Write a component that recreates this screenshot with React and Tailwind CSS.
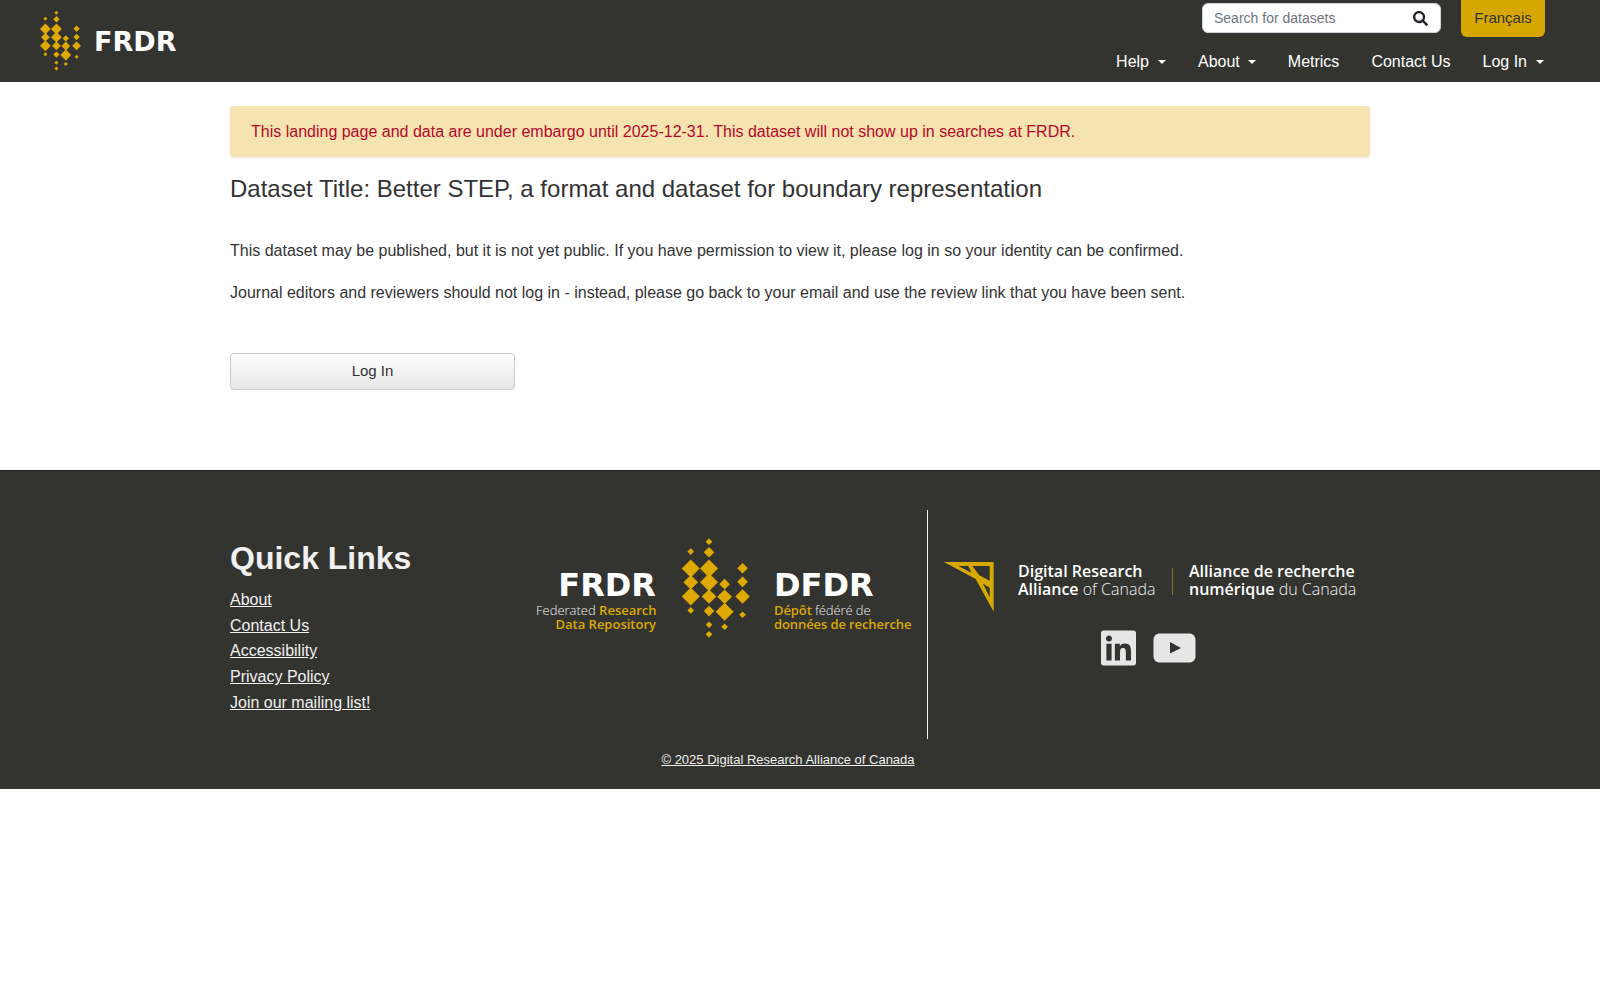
import React from "react";
import { FaSearch, FaLinkedin } from "react-icons/fa";

const D = [[567,94,10],[512,124,10],[567,126,16],[512,175,27],[567,175,27],[668,174,16],[512,216,22],[567,216,27],[614,222,16],[668,215,16],[512,259,27],[567,259,22],[614,260,22],[668,259,22],[512,301,10],[567,303,16],[614,305,27],[668,314,10],[567,344,10],[614,350,10],[567,373,10]];

function Diamonds({ className }) {
  return (
    <svg viewBox="480 80 210 310" className={className} fill="#dea900">
      {D.map(([x, y, r], i) => (
        <polygon key={i} points={`${x},${y - r} ${x + r},${y} ${x},${y + r} ${x - r},${y}`} />
      ))}
    </svg>
  );
}

function Caret({ tight }) {
  return <span className={`${tight ? "ml-[8px]" : "ml-[9px]"} inline-block align-[3px] border-x-[4px] border-t-[4px] border-x-transparent border-t-white`} />;
}

function Header() {
  return (
    <header className="flex h-[82px] justify-between bg-[#33342f] pr-[55px]">
      <div className="flex items-start pl-[39px] pt-[10px]">
        <Diamonds className="h-[62px] w-[42px]" />
        <span className="ml-[13px] mt-[16px] font-['DejaVu_Sans'] text-[27px] font-bold leading-[32px] text-white">FRDR</span>
      </div>
      <div className="flex flex-col items-end">
        <div className="flex items-start">
          <div className="mt-[3px] flex h-[30px] w-[239px] items-center justify-between rounded-[6px] border border-[#ced4da] bg-white pl-[11px] pr-[12px]">
            <span className="text-[14px] text-[#6c757d]">Search for datasets</span>
            <FaSearch className="h-[15px] w-[15px] text-[#212529]" />
          </div>
          <button className="ml-[20px] h-[37px] w-[84px] rounded-b-[6px] bg-[#d6a700] text-[15px] text-[#33342f]">Français</button>
        </div>
        <nav className="mr-[1px] mt-[13px] flex gap-[32px] text-[16px] leading-[24px] text-white">
          <span>Help<Caret /></span>
          <span>About<Caret tight /></span>
          <span>Metrics</span>
          <span>Contact Us</span>
          <span>Log In<Caret /></span>
        </nav>
      </div>
    </header>
  );
}

function Main() {
  return (
    <main className="mx-auto h-[388px] w-[1140px] pt-[24px] text-[#333333]">
      <div className="flex h-[51px] items-center rounded-[4px] bg-[#f5e4b0] px-[21px] text-[16px] text-[#b5082a] shadow-[0_1px_2px_rgba(0,0,0,0.1)]">
        This landing page and data are under embargo until 2025-12-31. This dataset will not show up in searches at FRDR.
      </div>
      <h1 className="mt-[17px] text-[24px] leading-[29px]">Dataset Title: Better STEP, a format and dataset for boundary representation</h1>
      <p className="mt-[36px] text-[16px] leading-[24px]">This dataset may be published, but it is not yet public. If you have permission to view it, please log in so your identity can be confirmed.</p>
      <p className="mt-[18px] text-[16px] leading-[24px]">Journal editors and reviewers should not log in - instead, please go back to your email and use the review link that you have been sent.</p>
      <button className="mt-[48px] block h-[37px] w-[285px] rounded-[4px] border border-[#ccc] bg-gradient-to-b from-white to-[#e6e6e6] text-[15px] text-[#333]">Log In</button>
    </main>
  );
}

function Footer() {
  const links = ["About", "Contact Us", "Accessibility", "Privacy Policy", "Join our mailing list!"];
  return (
    <footer className="h-[319px] border-t border-t-[#1d1e1c] bg-[#33342f] pt-[39px] text-[#f0f0f0]">
      <div className="mx-auto flex h-[229px] w-[1140px]">
        <div className="w-[306px] pt-[27px]">
          <h2 className="text-[32px] font-bold leading-[42px]">Quick Links</h2>
          <ul className="mt-[8px] text-[16px] leading-[25.7px] underline">
            {links.map((l) => <li key={l}>{l}</li>)}
          </ul>
        </div>
        <div className="flex w-[375px] items-start pt-[27px] font-['Open_Sans']">
          <div className="mt-[30px] w-[120px] whitespace-nowrap text-right">
            <div className="font-['DejaVu_Sans'] text-[32px] font-bold leading-[36px] text-white">FRDR</div>
            <div className="text-[13px] leading-[14px]"><span className="font-light">Federated </span><span className="font-semibold text-[#dea900]">Research</span></div>
            <div className="text-[13px] font-semibold leading-[14px] text-[#dea900]">Data Repository</div>
          </div>
          <Diamonds className="ml-[24px] h-[103px] w-[70px]" />
          <div className="ml-[24px] mt-[30px] w-[137px] whitespace-nowrap">
            <div className="font-['DejaVu_Sans'] text-[32px] font-bold leading-[36px] text-white">DFDR</div>
            <div className="text-[13px] leading-[14px] tracking-[-0.1px]"><span className="font-semibold text-[#dea900]">Dépôt</span><span className="font-light"> fédéré de</span></div>
            <div className="text-[13px] font-semibold leading-[14px] tracking-[-0.1px] text-[#dea900]">données de recherche</div>
          </div>
        </div>
        <div className="ml-[16px] w-px bg-[#f0f0f0]" />
        <div className="flex flex-col pl-[16px] pt-[52px]">
          <div className="flex items-start font-['Open_Sans'] text-[16px] leading-[18px]">
            <svg viewBox="73 96 150 150" className="h-[50px] w-[50px]">
              <polygon points="73,96 222,96 222,245 168,147" fill="#d6a900" />
              <polygon points="116,108 146,108 155,128" fill="#33342f" />
              <polygon points="158,108 210,108 210,152 179,136" fill="#33342f" />
              <polygon points="190,161 210,173 210,202" fill="#33342f" />
            </svg>
            <div className="ml-[24px] w-[154px] whitespace-nowrap"><div className="font-semibold text-white">Digital Research</div><div><span className="font-semibold text-white">Alliance</span> <span className="font-light">of Canada</span></div></div>
            <div className="mt-[6px] h-[27px] w-px bg-[#8a7320]" />
            <div className="ml-[16px] whitespace-nowrap"><div className="font-semibold text-white">Alliance de recherche</div><div><span className="font-semibold text-white">numérique</span> <span className="font-light">du Canada</span></div></div>
          </div>
          <div className="ml-[157px] mt-[16px] flex items-center gap-[17px] text-[#e6e6e6]">
            <FaLinkedin className="h-[40px] w-[35px]" />
            <svg viewBox="0 0 43 30" className="h-[30px] w-[43px]">
              <path fillRule="evenodd" fill="#e6e6e6" d="M7 0.5H36C40 0.5 42.5 3 42.5 7V23C42.5 27 40 29.5 36 29.5H7C3 29.5 0.5 27 0.5 23V7C0.5 3 3 0.5 7 0.5ZM17 9V20.500L28 15Z" />
            </svg>
          </div>
        </div>
      </div>
      <div className="mt-[12px] pr-[24px] text-center text-[13px] leading-[18px] underline">© 2025 Digital Research Alliance of Canada</div>
    </footer>
  );
}

export default function App() {
  return (
    <div className="min-h-[1000px] bg-white font-['Liberation_Sans',sans-serif]">
      <Header />
      <Main />
      <Footer />
    </div>
  );
}
